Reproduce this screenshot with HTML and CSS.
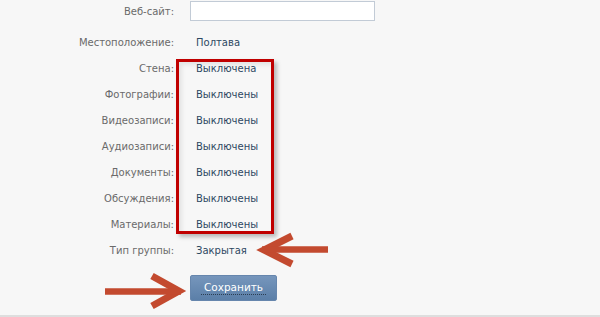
FILE: index.html
```html
<!DOCTYPE html>
<html lang="ru">
<head>
    <meta charset="UTF-8">
    <title>Настройки группы</title>
    <link rel="stylesheet" href="styles.css">
</head>
<body>
    <div class="page">
        <div class="form">
            <div class="row row-input">
                <div class="label">Веб-сайт:</div>
                <div class="value"><input class="text-input" type="text"></div>
            </div>
            <div class="row">
                <div class="label">Местоположение:</div>
                <div class="value"><span class="val">Полтава</span></div>
            </div>
            <div class="row">
                <div class="label">Стена:</div>
                <div class="value"><span class="val">Выключена</span></div>
            </div>
            <div class="row">
                <div class="label">Фотографии:</div>
                <div class="value"><span class="val">Выключены</span></div>
            </div>
            <div class="row">
                <div class="label">Видеозаписи:</div>
                <div class="value"><span class="val">Выключены</span></div>
            </div>
            <div class="row">
                <div class="label">Аудиозаписи:</div>
                <div class="value"><span class="val">Выключены</span></div>
            </div>
            <div class="row">
                <div class="label">Документы:</div>
                <div class="value"><span class="val">Выключены</span></div>
            </div>
            <div class="row">
                <div class="label">Обсуждения:</div>
                <div class="value"><span class="val">Выключены</span></div>
            </div>
            <div class="row">
                <div class="label">Материалы:</div>
                <div class="value"><span class="val">Выключены</span></div>
            </div>
            <div class="row">
                <div class="label">Тип группы:</div>
                <div class="value"><span class="val">Закрытая</span></div>
            </div>
            <div class="row row-button">
                <div class="label"></div>
                <div class="value"><button class="save-btn"><span>Сохранить</span></button></div>
            </div>
        </div>

        <!-- annotations drawn over the form -->
        <div class="highlight"></div>
        <svg class="arrows" width="600" height="317" viewBox="0 0 600 317">
            <g fill="none" stroke="#c34a2f" stroke-width="7" stroke-linejoin="miter" stroke-miterlimit="10">
                <polyline points="292,236 264,250 292,264"/>
                <line x1="262" y1="249.5" x2="328" y2="249.5" stroke-width="6.5"/>
                <polyline points="152,276 179,291 152,306"/>
                <line x1="105" y1="291.5" x2="181" y2="291.5" stroke-width="6.5"/>
            </g>
        </svg>
    </div>
</body>
</html>
```

FILE: styles.css
```css
* { box-sizing: border-box; }
body {
    margin: 0;
    background: #f7f7f7;
    font-family: 'DejaVu Sans', Tahoma, sans-serif;
    font-size: 10px;
}
.page {
    position: relative;
    height: 317px;
    border-bottom: 2px solid #dedede;
    overflow: hidden;
}
.form {
    display: flex;
    flex-direction: column;
    padding-top: 1px;
}
.row {
    display: grid;
    grid-template-columns: 174px 1fr;
    column-gap: 16px;
    align-items: center;
    height: 26px;
}
.row-input {
    height: 20px;
    margin-bottom: 8px;
}
.row-button {
    margin-top: 12px;
}
.label {
    text-align: right;
    color: #6a6a6a;
}
.val {
    padding-left: 6px;
    color: #2d4862;
}
.text-input {
    display: block;
    width: 185px;
    height: 20px;
    margin: 0;
    border: 1px solid #c2cbd6;
    background: #fff;
    outline: none;
}
.save-btn {
    display: block;
    width: 87px;
    height: 26px;
    padding: 0;
    border: 1px solid #6686ad;
    border-radius: 2px;
    background: linear-gradient(#7696bc, #5b7fa8);
    color: #fff;
    font-family: inherit;
    font-size: 10.5px;
    cursor: pointer;
}
.save-btn span {
    display: inline-block;
    padding: 0 3px 1px;
    border-bottom: 1px dotted #2c3e52;
}
.highlight {
    position: absolute;
    left: 176px;
    top: 59px;
    width: 98px;
    height: 175px;
    border: 3px solid #c00000;
    box-shadow: 3px 3px 4px rgba(0,0,0,0.25), inset 3px 3px 4px rgba(0,0,0,0.08);
}
.arrows {
    position: absolute;
    left: 0;
    top: 0;
}
```
